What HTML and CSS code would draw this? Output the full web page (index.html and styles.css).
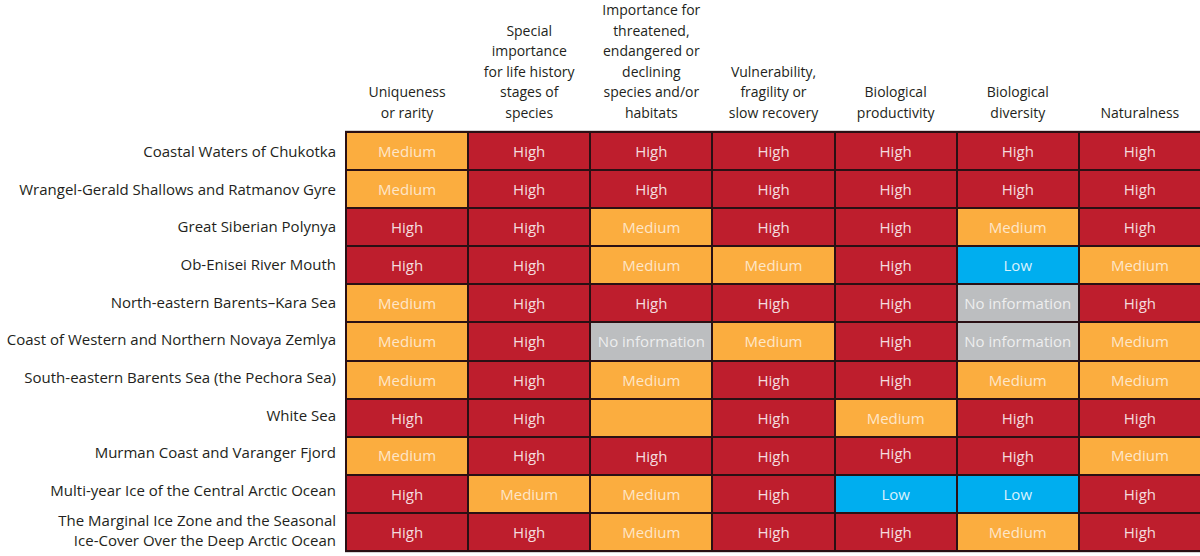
FILE: index.html
```html
<!DOCTYPE html>
<html lang="en">
<head>
<meta charset="utf-8">
<title>Arctic areas — criteria</title>
<link rel="stylesheet" href="styles.css">
</head>
<body>
<div class="chart">
  <div class="corner"></div>
  <div class="headrow">
    <div class="head">Uniqueness<br>or rarity</div>
    <div class="head">Special<br>importance<br>for life history<br>stages of<br>species</div>
    <div class="head">Importance for<br>threatened,<br>endangered or<br>declining<br>species and/or<br>habitats</div>
    <div class="head">Vulnerability,<br>fragility or<br>slow recovery</div>
    <div class="head">Biological<br>productivity</div>
    <div class="head">Biological<br>diversity</div>
    <div class="head">Naturalness</div>
  </div>

  <div class="labels">
    <div class="label">Coastal Waters of Chukotka</div>
    <div class="label">Wrangel-Gerald Shallows and Ratmanov Gyre</div>
    <div class="label">Great Siberian Polynya</div>
    <div class="label">Ob-Enisei River Mouth</div>
    <div class="label">North-eastern Barents–Kara Sea</div>
    <div class="label">Coast of Western and Northern Novaya Zemlya</div>
    <div class="label">South-eastern Barents Sea (the Pechora Sea)</div>
    <div class="label">White Sea</div>
    <div class="label">Murman Coast and Varanger Fjord</div>
    <div class="label">Multi-year Ice of the Central Arctic Ocean</div>
    <div class="label two">The Marginal Ice Zone and the Seasonal<br>Ice-Cover Over the Deep Arctic Ocean</div>
  </div>

  <div class="grid">
    <div class="c m">Medium</div><div class="c h">High</div><div class="c h">High</div><div class="c h">High</div><div class="c h">High</div><div class="c h">High</div><div class="c h">High</div>
    <div class="c m">Medium</div><div class="c h">High</div><div class="c h">High</div><div class="c h">High</div><div class="c h">High</div><div class="c h">High</div><div class="c h">High</div>
    <div class="c h">High</div><div class="c h">High</div><div class="c m">Medium</div><div class="c h">High</div><div class="c h">High</div><div class="c m">Medium</div><div class="c h">High</div>
    <div class="c h">High</div><div class="c h">High</div><div class="c m">Medium</div><div class="c m">Medium</div><div class="c h">High</div><div class="c l">Low</div><div class="c m">Medium</div>
    <div class="c m">Medium</div><div class="c h">High</div><div class="c h">High</div><div class="c h">High</div><div class="c h">High</div><div class="c n">No information</div><div class="c h">High</div>
    <div class="c m">Medium</div><div class="c h">High</div><div class="c n">No information</div><div class="c m">Medium</div><div class="c h">High</div><div class="c n">No information</div><div class="c m">Medium</div>
    <div class="c m">Medium</div><div class="c h">High</div><div class="c m">Medium</div><div class="c h">High</div><div class="c h">High</div><div class="c m">Medium</div><div class="c m">Medium</div>
    <div class="c h">High</div><div class="c h">High</div><div class="c m"></div><div class="c h">High</div><div class="c m">Medium</div><div class="c h">High</div><div class="c h">High</div>
    <div class="c m lift">Medium</div><div class="c h lift">High</div><div class="c h">High</div><div class="c h">High</div><div class="c h up">High</div><div class="c h">High</div><div class="c m lift">Medium</div>
    <div class="c h">High</div><div class="c m">Medium</div><div class="c m">Medium</div><div class="c h">High</div><div class="c l">Low</div><div class="c l">Low</div><div class="c h">High</div>
    <div class="c h">High</div><div class="c h">High</div><div class="c m">Medium</div><div class="c h">High</div><div class="c h">High</div><div class="c m">Medium</div><div class="c h">High</div>
  </div>
</div>
</body>
</html>
```
FILE: styles.css
```css
html, body {
  margin: 0;
  padding: 0;
  background: #ffffff;
}

body {
  font-family: "Open Sans", "Liberation Sans", sans-serif;
  color: #231f20;
  width: 1200px;
  height: 556px;
  overflow: hidden;
}

.chart {
  display: grid;
  grid-template-columns: 345px 855px;
  grid-template-rows: 131px 421px;
}

.headrow {
  display: grid;
  grid-template-columns: repeat(7, 1fr);
  column-gap: 2px;
  padding: 0 0 10px 2px;
  align-items: end;
}

.head {
  text-align: center;
  font-size: 14px;
  line-height: 20.5px;
  color: #231f20;
}

.labels {
  display: grid;
  grid-template-rows: repeat(11, 1fr);
  padding: 2px 9px 2px 0;
  row-gap: 2px;
}

.label {
  display: flex;
  align-items: center;
  justify-content: flex-end;
  text-align: right;
  font-size: 15px;
  white-space: nowrap;
  color: #231f20;
}

.label.two {
  line-height: 20px;
}

.grid {
  display: grid;
  grid-template-columns: repeat(7, 1fr);
  grid-template-rows: repeat(11, 1fr);
  gap: 2px;
  padding: 2px 0 2px 2px;
  background: #2a1014;
  box-shadow: 0 -1px 0 #d4d4d4, 0 1px 0 #d4d4d4;
}

.c {
  display: flex;
  align-items: center;
  justify-content: center;
  font-size: 15px;
  white-space: nowrap;
}

.h {
  background: #be1e2d;
  color: rgba(255, 255, 255, 0.86);
}

.m {
  background: #fbad3f;
  color: rgba(255, 255, 255, 0.72);
}

.l {
  background: #00aeef;
  color: rgba(255, 255, 255, 0.86);
}

.n {
  background: #bcbec0;
  color: rgba(255, 255, 255, 0.75);
}

.lift {
  padding-bottom: 2px;
}

.up {
  padding-bottom: 5px;
}
```
